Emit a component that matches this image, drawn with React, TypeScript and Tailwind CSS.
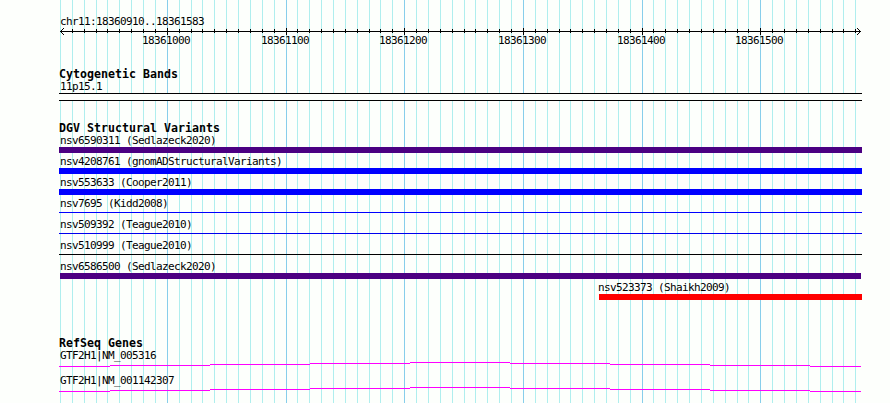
const START = 18360910
const SCALE = 800 / 674

interface Variant {
  name: string
  kind: string
  bar: string
  offset?: string
}

const variants: Variant[] = [
  { name: 'nsv6590311 (Sedlazeck2020)', kind: 'thick', bar: 'w-[803px] bg-[#4b0082]' },
  { name: 'nsv4208761 (gnomADStructuralVariants)', kind: 'thick', bar: 'w-[803px] bg-[#0000ff]' },
  { name: 'nsv553633 (Cooper2011)', kind: 'thick', bar: 'w-[803px] bg-[#0000ff]' },
  { name: 'nsv7695 (Kidd2008)', kind: 'thin', bar: 'w-[803px] bg-[#0000ff]' },
  { name: 'nsv509392 (Teague2010)', kind: 'thin', bar: 'w-[803px] bg-[#0000ee]' },
  { name: 'nsv510999 (Teague2010)', kind: 'thin', bar: 'w-[803px] bg-black' },
  { name: 'nsv6586500 (Sedlazeck2020)', kind: 'thick', bar: 'ml-px w-[801px] bg-[#4b0082]' },
  {
    name: 'nsv523373 (Shaikh2009)',
    kind: 'thick',
    bar: 'ml-0.5 w-[263px] bg-[#ff0000]',
    offset: 'ml-[538px]',
  },
]

const genes = ['GTF2H1|NM_005316', 'GTF2H1|NM_001142307']

const ticks = Array.from({ length: 68 }, (_, i) => {
  const pos = START + i * 10
  return { pos, x: Math.round(60 + i * 10 * SCALE), major: pos % 100 === 0 }
})

const majorTicks = ticks.filter((t) => t.major)

// y level and x range for each piece of the intron line
const steps = [
  [0, 51, 4],
  [51, 151, 3],
  [151, 251, 2],
  [251, 351, 1],
  [351, 451, 0],
  [451, 551, 1],
  [551, 651, 2],
  [651, 751, 3],
  [751, 802, 4],
]

const Gridlines = () => (
  <svg
    className="absolute inset-0 -z-10"
    width="890"
    height="403"
    shapeRendering="crispEdges"
  >
    {ticks.map((t) => (
      <rect
        key={t.pos}
        x={t.x}
        y="0"
        width="1"
        height="403"
        fill={t.major ? '#87ceeb' : '#afeeee'}
      />
    ))}
  </svg>
)

const Ruler = () => (
  <svg className="block" width="890" height="7" viewBox="0 28 890 7" shapeRendering="crispEdges">
    <rect x="60" y="31" width="801" height="1" />
    {ticks.slice(1).map((t) => (
      <rect
        key={t.pos}
        x={t.x}
        y={t.major ? 28 : 29}
        width="1"
        height={t.major ? 7 : 4}
      />
    ))}
    <path d="M61 30h1v1h-1zM62 29h1v1h-1zM63 28h1v1h-1zM61 32h1v1h-1zM62 33h1v1h-1zM63 34h1v1h-1z" />
    <path d="M859 30h1v1h-1zM858 29h1v1h-1zM857 28h1v1h-1zM859 32h1v1h-1zM858 33h1v1h-1zM857 34h1v1h-1z" />
  </svg>
)

const Label = ({ text }: { text: string }) => (
  <div className="h-[13px] pl-px text-[11px] leading-[13px] tracking-[-0.622px] whitespace-nowrap">
    {text}
  </div>
)

const Heading = ({ text }: { text: string }) => (
  <h2 className="h-3 text-[11.6px] leading-[13px] font-bold tracking-[0.016px] whitespace-nowrap">
    {text}
  </h2>
)

const VariantRow = ({ variant }: { variant: Variant }) => (
  <div className={`h-[21px] ${variant.offset ?? ''}`}>
    <Label text={variant.name} />
    <div className={`${variant.kind === 'thick' ? 'h-1.5' : 'mt-0.5 h-px'} ${variant.bar}`} />
  </div>
)

const GeneRow = ({ name }: { name: string }) => (
  <div className="h-[25px]">
    <Label text={name} />
    <svg className="block" width="803" height="5" shapeRendering="crispEdges">
      {steps.map(([from, to, y]) => (
        <rect key={from} x={from} y={y} width={to - from} height="1" fill="#ff00ff" />
      ))}
    </svg>
  </div>
)

const App = () => {
  return (
    <div className="relative isolate h-[403px] w-[890px] overflow-hidden bg-[#fdfffc] pt-[15px] font-['DejaVu_Sans_Mono',monospace] text-black">
      <Gridlines />

      <header className="h-[53px]">
        <div className="pl-[59px]">
          <Label text="chr11:18360910..18361583" />
        </div>
        <Ruler />
        <div className="-mt-px flex pl-[141px]">
          {majorTicks.map((t, i) => (
            <div
              key={t.pos}
              className="shrink-0"
              style={{ width: (majorTicks[i + 1]?.x ?? t.x + 48) - t.x }}
            >
              <Label text={String(t.pos)} />
            </div>
          ))}
        </div>
      </header>

      <main className="pl-[59px]">
        <section className="h-[54px]">
          <Heading text="Cytogenetic Bands" />
          <Label text="11p15.1" />
          <div className="h-2 w-[803px] border-y border-black bg-[#fdfffc]" />
        </section>

        <section className="h-[215px]">
          <Heading text="DGV Structural Variants" />
          {variants.map((v) => (
            <VariantRow key={v.name} variant={v} />
          ))}
        </section>

        <section>
          <Heading text="RefSeq Genes" />
          {genes.map((g) => (
            <GeneRow key={g} name={g} />
          ))}
        </section>
      </main>
    </div>
  )
}

export default App
